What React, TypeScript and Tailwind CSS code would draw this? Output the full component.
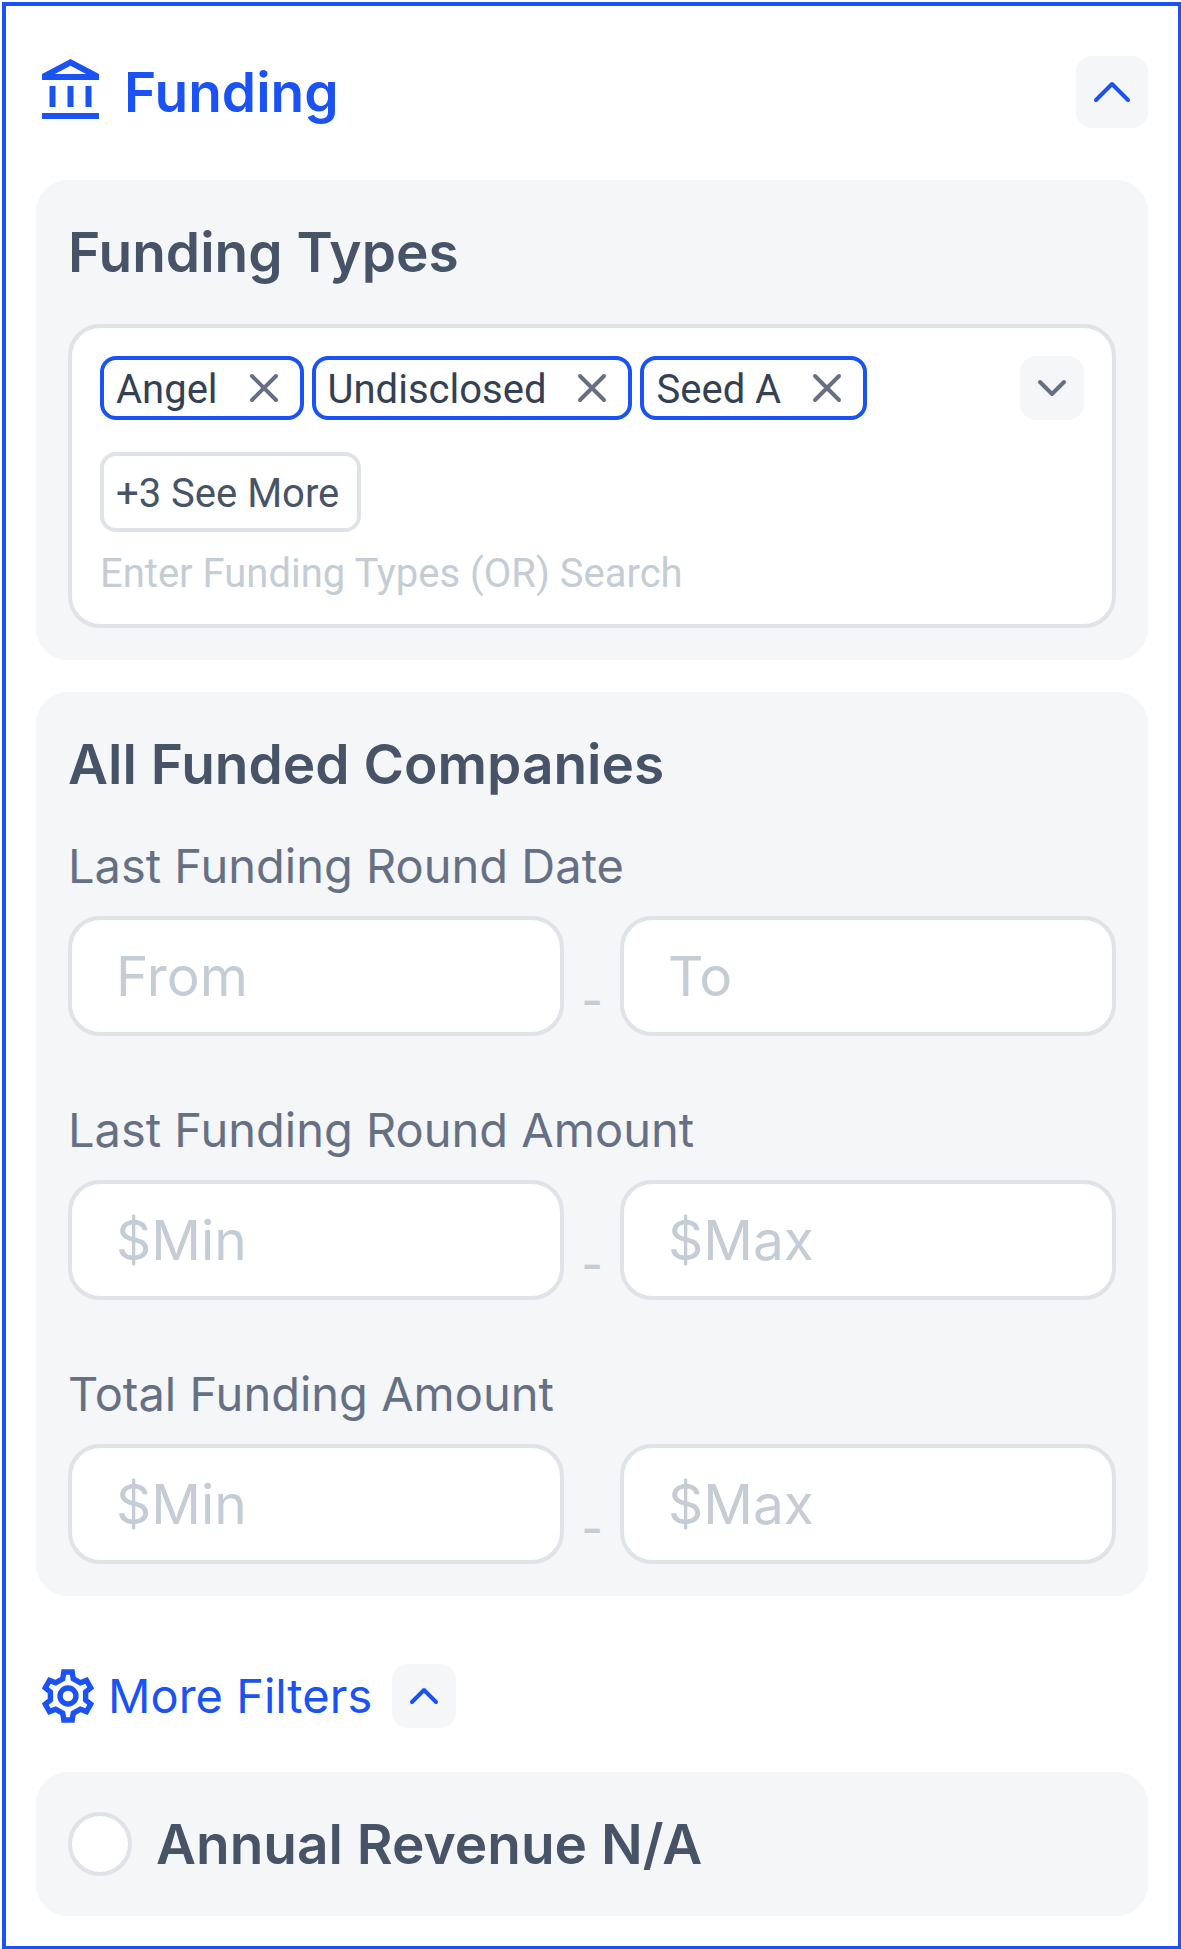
import { ReactNode, useState } from "react";

interface ChevronProps {
  direction?: "up" | "down";
  size?: "sm" | "lg";
}

interface IconButtonProps extends ChevronProps {
  label: string;
  className: string;
}

interface RangeFieldProps {
  id: string;
  label: string;
  from: string;
  to: string;
}

const ranges: RangeFieldProps[] = [
  { id: "round-date", label: "Last Funding Round Date", from: "From", to: "To" },
  { id: "round-amount", label: "Last Funding Round Amount", from: "$Min", to: "$Max" },
  { id: "total-amount", label: "Total Funding Amount", from: "$Min", to: "$Max" },
];

function BankIcon() {
  return (
    <svg viewBox="0 0 24 24" className="size-18" fill="currentColor" aria-hidden="true">
      <path d="M6.5 10h-2v7h2v-7zm6 0h-2v7h2v-7zm8.5 9H2v2h19v-2zm-2.5-9h-2v7h2v-7zm-7-6.74L16.71 6H6.29l5.21-2.74m0-2.26L2 6v2h19V6l-9.5-5z" />
    </svg>
  );
}

const gearOutline =
  "M-7.7-19L-6.5-26.7H6.5L7.7-19L12.6-16.2L19.7-18.9L26.2-7.6L20.3-2.8V2.8L26.2 7.6L19.7 18.9L12.6 16.2L7.7 19L6.5 26.7H-6.5L-7.7 19L-12.6 16.2L-19.7 18.9L-26.2 7.6L-20.3 2.8V-2.8L-26.2-7.6L-19.7-18.9L-12.6-16.2Z";

function GearIcon() {
  return (
    <svg viewBox="-32 -32 64 64" className="size-16" fill="none" stroke="currentColor" aria-hidden="true">
      <clipPath id="gear-clip">
        <path d={gearOutline} />
      </clipPath>
      <path d={gearOutline} strokeWidth="10.8" clipPath="url(#gear-clip)" />
      <circle r="8" strokeWidth="5.4" />
    </svg>
  );
}

function Chevron({ direction = "down", size = "sm" }: ChevronProps) {
  const down = size === "lg" ? "M-16-8L0 8L16-8" : "M-12-6L0 6L12-6";
  const up = size === "lg" ? "M-16 8L0-8L16 8" : "M-12 6L0-6L12 6";
  return (
    <svg
      viewBox="-24 -24 48 48"
      className="size-12"
      fill="none"
      stroke="currentColor"
      strokeWidth="4"
      strokeLinecap="round"
      strokeLinejoin="round"
      aria-hidden="true"
    >
      <path d={direction === "up" ? up : down} />
    </svg>
  );
}

function IconButton({ label, className, direction, size }: IconButtonProps) {
  return (
    <button
      type="button"
      aria-label={label}
      className={`flex shrink-0 items-center justify-center rounded-2xl bg-[#f4f6f8] ${className}`}
    >
      <Chevron direction={direction} size={size} />
    </button>
  );
}

function Chip({ text, onRemove }: { text: string; onRemove: () => void }) {
  return (
    <div className="flex h-16 items-center gap-[22px] rounded-2xl border-4 border-[#1a52f4] px-3 font-['Roboto',sans-serif] text-[40px] leading-12 text-[#344054]">
      <span className="pt-1">{text}</span>
      <button
        type="button"
        aria-label={`Remove ${text}`}
        onClick={onRemove}
        className="text-[#667085]"
      >
        <svg
          viewBox="-24 -24 48 48"
          className="size-12"
          stroke="currentColor"
          strokeWidth="4"
          strokeLinecap="round"
          aria-hidden="true"
        >
          <path d="M-12-12L12 12M12-12L-12 12" />
        </svg>
      </button>
    </div>
  );
}

function Card({ title, children }: { title: string; children: ReactNode }) {
  return (
    <section className="rounded-[32px] bg-[#f4f6f8] p-8">
      <h3 className="text-[55px] leading-20 font-semibold text-[#475467]">{title}</h3>
      {children}
    </section>
  );
}

function RangeField({ id, label, from, to }: RangeFieldProps) {
  const inputClass =
    "h-30 w-full min-w-0 flex-1 rounded-[32px] border-4 border-[#dfe3e8] bg-white px-11 text-[55px] text-[#344054] placeholder:text-[#c4cdd5]";
  return (
    <div>
      <label htmlFor={id} className="mb-4 block text-[47px] leading-17 text-[#667085]">
        {label}
      </label>
      <div className="flex">
        <input id={id} type="text" placeholder={from} className={inputClass} />
        <span className="w-14 pt-12 text-center text-[47px] leading-18 font-medium text-[#c4cdd5]">
          -
        </span>
        <input type="text" aria-label={`${label} ${to}`} placeholder={to} className={inputClass} />
      </div>
    </div>
  );
}

export default function App() {
  const [types, setTypes] = useState(["Angel", "Undisclosed", "Seed A"]);

  return (
    <div className="bg-white pt-[2px] pl-[2px] font-['Inter',sans-serif]">
      <main className="border-4 border-r-[3px] border-b-[3px] border-[#1a52f4] p-[30px] pt-[50px]">
        {/* Header */}
        <header className="mb-13 flex items-center justify-between text-[#1a52f4]">
          <div className="flex items-center gap-4">
            <BankIcon />
            <h2 className="text-[55px] leading-18 font-semibold">Funding</h2>
          </div>
          <IconButton label="Collapse funding" direction="up" size="lg" className="size-18" />
        </header>

        <div className="flex flex-col gap-8">
          <Card title="Funding Types">
            <div className="mt-8 rounded-[32px] border-4 border-[#dfe3e8] bg-white p-7">
              <div className="flex items-start justify-between">
                <div className="flex flex-wrap gap-2">
                  {types.map((type) => (
                    <Chip
                      key={type}
                      text={type}
                      onRemove={() => setTypes(types.filter((t) => t !== type))}
                    />
                  ))}
                </div>
                <IconButton label="Show funding types" className="size-16 text-[#667085]" />
              </div>
              <button
                type="button"
                className="mt-8 block h-20 rounded-2xl border-4 border-[#dfe3e8] pt-1 pr-[18px] pl-3 font-['Roboto',sans-serif] text-[40px] leading-12 text-[#475467]"
              >
                +3 See More
              </button>
              <input
                type="text"
                aria-label="Funding types"
                placeholder="Enter Funding Types (OR) Search"
                className="mt-5 block h-11 w-full font-['Roboto',sans-serif] text-[40px] leading-11 text-[#344054] placeholder:text-[#c4cdd5]"
              />
            </div>
          </Card>

          <Card title="All Funded Companies">
            <div className="mt-7 flex flex-col gap-15">
              {ranges.map((range) => (
                <RangeField key={range.id} {...range} />
              ))}
            </div>
          </Card>
        </div>

        {/* More filters */}
        <div className="mt-17 mb-11 flex items-center text-[#1a52f4]">
          <GearIcon />
          <span className="mr-5 ml-2 text-[47px] leading-16">More Filters</span>
          <IconButton label="Collapse more filters" direction="up" className="size-16" />
        </div>

        <label className="flex items-center gap-6 rounded-[32px] bg-[#f4f6f8] p-8">
          <input
            type="radio"
            name="revenue"
            className="size-16 shrink-0 appearance-none rounded-full border-4 border-[#dfe3e8] bg-white checked:border-[#1a52f4]"
          />
          <span className="text-[55px] leading-20 font-semibold text-[#475467]">
            Annual Revenue N/A
          </span>
        </label>
      </main>
    </div>
  );
}
